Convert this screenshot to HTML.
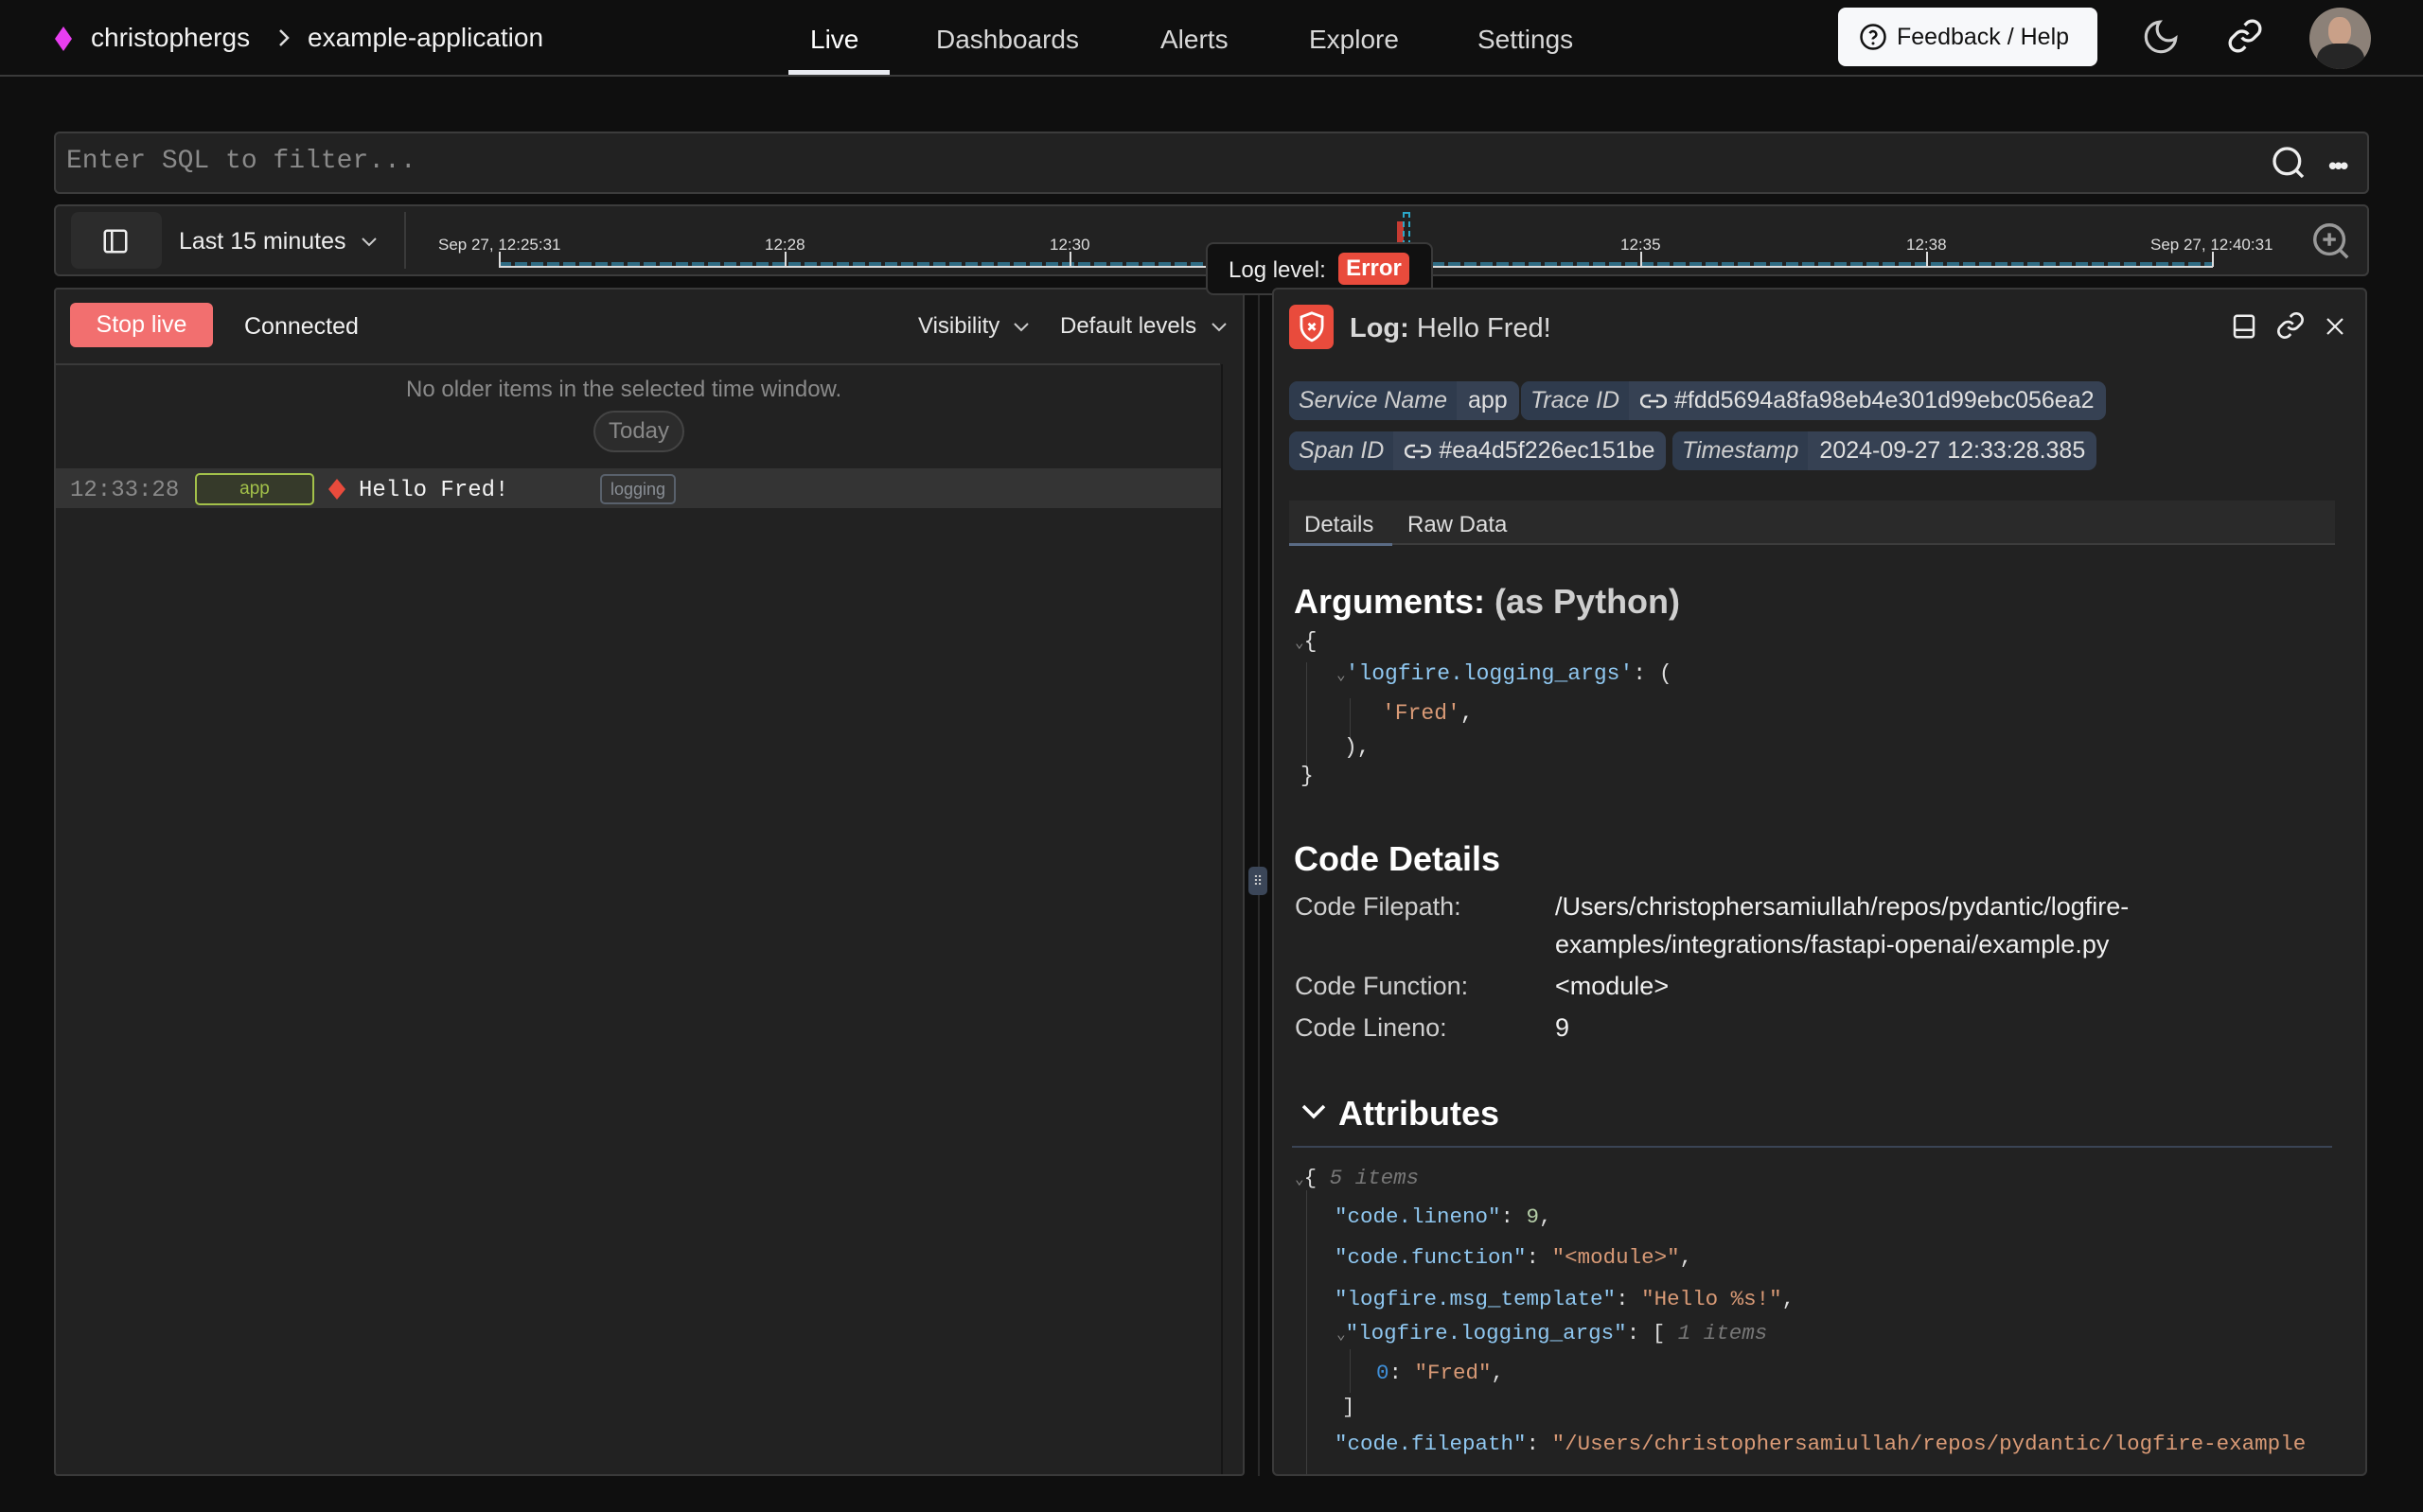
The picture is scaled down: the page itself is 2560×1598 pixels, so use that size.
<!DOCTYPE html>
<html><head><meta charset="utf-8"><style>
*{box-sizing:border-box;margin:0;padding:0}
body{width:2560px;height:1598px;background:#0f0f0f;color:#e8e8e8;font-family:"Liberation Sans",sans-serif;position:relative;overflow:hidden}
.a{position:absolute;white-space:nowrap}
.m{font-family:"Liberation Mono",monospace}
.nav{font-size:28px;color:#d8d8d8;top:26px}
.pill{position:absolute;height:41px;border-radius:9px;background:#364153;display:flex;align-items:center;font-size:25px;color:#e0e0e0;overflow:hidden}
.pill .k{background:#2f3b4d;height:100%;display:flex;align-items:center;padding:0 10px;font-style:italic;color:#cfcfcf}
.pill .v{padding:0 12px;display:flex;align-items:center;gap:8px}
.c{font-size:23px}
.c2{font-size:22.5px}
.key{color:#8fc7f0}.str{color:#d99a76}.num{color:#b5cea8}.gr{color:#777;font-style:italic}
.lbl{font-size:27px;color:#cfcfcf}
.val{font-size:27px;color:#f0f0f0}
</style></head><body>
<div class="a" style="left:0;top:79px;width:2560px;height:2px;background:#3a3a3a"></div>
<div class="a" style="left:58px;top:28px;width:18px;height:26px;background:#e83ef0;clip-path:polygon(50% 0,100% 50%,50% 100%,0 50%)"></div>
<div class="a" style="left:96px;top:24px;font-size:28px;color:#f2f2f2">christophergs</div>
<svg class="a" style="left:292px;top:28px" width="16" height="24" viewBox="0 0 16 24"><path d="M4 4l8 8-8 8" stroke="#ddd" stroke-width="2.5" fill="none"/></svg>
<div class="a" style="left:325px;top:24px;font-size:28px;color:#f2f2f2">example-application</div>
<div class="a nav" style="left:856px;color:#fff">Live</div>
<div class="a" style="left:833px;top:74px;width:107px;height:5px;background:#e8eaf0"></div>
<div class="a nav" style="left:989px">Dashboards</div>
<div class="a nav" style="left:1226px">Alerts</div>
<div class="a nav" style="left:1383px">Explore</div>
<div class="a nav" style="left:1561px">Settings</div>
<div class="a" style="left:1942px;top:8px;width:274px;height:62px;background:#f7f8fa;border-radius:8px;color:#111;font-size:25px;display:flex;align-items:center;padding-left:22px;gap:10px">
<svg width="30" height="30" viewBox="0 0 24 24"><circle cx="12" cy="12" r="10" stroke="#111" stroke-width="2" fill="none"/><path d="M9.3 9a2.8 2.8 0 0 1 5.4 1c0 2-3 2.5-3 4" stroke="#111" stroke-width="2" fill="none"/><circle cx="12" cy="17.5" r="1.2" fill="#111"/></svg>Feedback / Help</div>
<svg class="a" style="left:2262px;top:18px" width="42" height="42" viewBox="0 0 24 24"><path d="M21 12.8A9 9 0 1 1 11.2 3a7 7 0 0 0 9.8 9.8z" stroke="#ccc" stroke-width="1.8" fill="none"/></svg>
<svg class="a" style="left:2352px;top:18px" width="40" height="40" viewBox="0 0 24 24"><path d="M10 13a5 5 0 0 0 7.5.5l3-3a5 5 0 0 0-7-7l-1.7 1.7M14 11a5 5 0 0 0-7.5-.5l-3 3a5 5 0 0 0 7 7l1.7-1.7" stroke="#eee" stroke-width="2" fill="none"/></svg>
<div class="a" style="left:2440px;top:8px;width:65px;height:65px;border-radius:50%;overflow:hidden;background:#8c8178">
<div class="a" style="left:20px;top:10px;width:24px;height:30px;border-radius:45%;background:#c9a088"></div>
<div class="a" style="left:8px;top:38px;width:50px;height:40px;border-radius:40% 40% 0 0;background:#262626"></div></div>
<div class="a" style="left:57px;top:139px;width:2446px;height:66px;background:#222;border:2px solid #3c3c3c;border-radius:6px"></div>
<div class="a m" style="left:70px;top:155px;font-size:28px;color:#8a8a8a">Enter SQL to filter...</div>
<svg class="a" style="left:2398px;top:152px" width="40" height="40" viewBox="0 0 24 24"><circle cx="11" cy="11" r="8" stroke="#eee" stroke-width="2" fill="none"/><path d="M17 17l4 4" stroke="#eee" stroke-width="2"/></svg>
<div class="a" style="left:2460px;top:160px;font-size:26px;color:#eee;letter-spacing:-3px;font-weight:bold">•••</div>
<div class="a" style="left:57px;top:216px;width:2446px;height:76px;background:#222;border:2px solid #3c3c3c;border-radius:6px"></div>
<div class="a" style="left:75px;top:224px;width:96px;height:60px;background:#2c2c2c;border-radius:8px"></div>
<svg class="a" style="left:107px;top:240px" width="30" height="30" viewBox="0 0 24 24"><rect x="3" y="3" width="18" height="18" rx="2" stroke="#eee" stroke-width="2" fill="none"/><path d="M9 3v18" stroke="#eee" stroke-width="2"/></svg>
<div class="a" style="left:189px;top:241px;font-size:25px;color:#eee">Last 15 minutes</div>
<svg class="a" style="left:380px;top:245px" width="20" height="20" viewBox="0 0 20 20"><path d="M3 7l7 7 7-7" stroke="#ccc" stroke-width="2" fill="none"/></svg>
<div class="a" style="left:427px;top:224px;width:2px;height:60px;background:#3a3a3a"></div>
<div class="a" style="left:527px;top:277px;width:1811px;height:4px;background:repeating-linear-gradient(90deg,#2f6c84 0 13px,transparent 13px 17px)"></div>
<div class="a" style="left:527px;top:281px;width:1811px;height:2px;background:#ddd"></div>
<div class="a" style="left:527px;top:266px;width:2px;height:16px;background:#ddd"></div>
<div class="a" style="left:829px;top:266px;width:2px;height:16px;background:#ddd"></div>
<div class="a" style="left:1130px;top:266px;width:2px;height:16px;background:#ddd"></div>
<div class="a" style="left:1733px;top:266px;width:2px;height:16px;background:#ddd"></div>
<div class="a" style="left:2035px;top:266px;width:2px;height:16px;background:#ddd"></div>
<div class="a" style="left:2337px;top:266px;width:2px;height:16px;background:#ddd"></div>
<div class="a" style="left:463px;top:249px;font-size:17px;color:#ddd">Sep 27, 12:25:31</div>
<div class="a" style="left:808px;top:249px;font-size:17px;color:#ddd">12:28</div>
<div class="a" style="left:1109px;top:249px;font-size:17px;color:#ddd">12:30</div>
<div class="a" style="left:1712px;top:249px;font-size:17px;color:#ddd">12:35</div>
<div class="a" style="left:2014px;top:249px;font-size:17px;color:#ddd">12:38</div>
<div class="a" style="left:2272px;top:249px;font-size:17px;color:#ddd">Sep 27, 12:40:31</div>
<div class="a" style="left:1476px;top:234px;width:7px;height:22px;background:#c63b32"></div>
<div class="a" style="left:1482px;top:224px;width:8px;height:36px;border:2px dashed #2ba7c8"></div>
<svg class="a" style="left:2440px;top:232px" width="46" height="46" viewBox="0 0 24 24"><circle cx="11" cy="11" r="8" stroke="#999" stroke-width="1.8" fill="none"/><path d="M17 17l4 4M11 7.5v7M7.5 11h7" stroke="#999" stroke-width="1.8"/></svg>
<div class="a" style="left:57px;top:304px;width:1258px;height:1256px;background:#222;border:2px solid #3a3a3a;border-radius:4px"></div>
<div class="a" style="left:59px;top:384px;width:1230px;height:2px;background:#3a3a3a"></div>
<div class="a" style="left:1290px;top:385px;width:2px;height:1173px;background:#161616"></div>
<div class="a" style="left:74px;top:320px;width:151px;height:47px;background:#f26f6f;border-radius:6px;color:#fff;font-size:25px;display:flex;align-items:center;justify-content:center">Stop live</div>
<div class="a" style="left:258px;top:331px;font-size:25px;color:#f2f2f2">Connected</div>
<div class="a" style="left:970px;top:331px;font-size:24px;color:#e8e8e8">Visibility</div>
<svg class="a" style="left:1069px;top:335px" width="20" height="20" viewBox="0 0 20 20"><path d="M3 7l7 7 7-7" stroke="#ccc" stroke-width="2" fill="none"/></svg>
<div class="a" style="left:1120px;top:331px;font-size:24px;color:#e8e8e8">Default levels</div>
<svg class="a" style="left:1278px;top:335px" width="20" height="20" viewBox="0 0 20 20"><path d="M3 7l7 7 7-7" stroke="#ccc" stroke-width="2" fill="none"/></svg>
<div class="a" style="left:429px;top:398px;font-size:24px;color:#8a8a8a">No older items in the selected time window.</div>
<div class="a" style="left:627px;top:434px;width:96px;height:44px;border:2px solid #444;background:#2c2c2c;border-radius:22px;font-size:24px;color:#888;display:flex;align-items:center;justify-content:center">Today</div>
<div class="a" style="left:59px;top:495px;width:1231px;height:42px;background:#343434"></div>
<div class="a m" style="left:74px;top:505px;font-size:24px;color:#8a8a8a">12:33:28</div>
<div class="a" style="left:206px;top:500px;width:126px;height:34px;border:2px solid #a3c14a;background:#363a2a;border-radius:5px;color:#a3c14a;font-size:19px;display:flex;align-items:center;justify-content:center">app</div>
<div class="a" style="left:347px;top:506px;width:18px;height:22px;background:#e94b3c;clip-path:polygon(50% 0,100% 50%,50% 100%,0 50%)"></div>
<div class="a m" style="left:379px;top:505px;font-size:24px;color:#f2f2f2">Hello Fred!</div>
<div class="a" style="left:634px;top:501px;width:80px;height:32px;border:2px solid #59616c;border-radius:5px;color:#8a8f96;font-size:18px;display:flex;align-items:center;justify-content:center">logging</div>
<div class="a" style="left:1329px;top:304px;width:2px;height:1256px;background:#2a2a2a"></div>
<div class="a" style="left:1319px;top:916px;width:20px;height:30px;background:#3b4658;border-radius:5px;color:#ccc;font-size:14px;text-align:center;line-height:30px">⠿</div>
<div class="a" style="left:1274px;top:256px;width:240px;height:56px;background:#111;border:2px solid #3a3a3a;border-radius:8px"></div>
<div class="a" style="left:1298px;top:272px;font-size:24px;color:#eee">Log level:</div>
<div class="a" style="left:1414px;top:267px;width:75px;height:34px;background:#e94b3c;border-radius:6px;color:#fff;font-size:24px;font-weight:bold;text-align:center;line-height:34px">Error</div>
<div class="a" style="left:1344px;top:304px;width:1157px;height:1256px;background:#222;border:2px solid #3a3a3a;border-radius:6px"></div>
<div class="a" style="left:1362px;top:322px;width:47px;height:47px;background:#e94b3c;border-radius:7px"></div>
<svg class="a" style="left:1369px;top:328px" width="34" height="36" viewBox="0 0 24 26"><path d="M12 2l8 3v7c0 5-3.5 9-8 11-4.5-2-8-6-8-11V5z" stroke="#fff" stroke-width="2" fill="none"/><path d="M9.5 10l5 5M14.5 10l-5 5" stroke="#fff" stroke-width="2"/></svg>
<div class="a" style="left:1426px;top:331px;font-size:29px;color:#d8d8d8"><b>Log:</b> Hello Fred!</div>
<svg class="a" style="left:2356px;top:330px" width="30" height="30" viewBox="0 0 24 24"><rect x="4" y="3" width="16" height="18" rx="2" stroke="#eee" stroke-width="2" fill="none"/><path d="M4 15h16" stroke="#eee" stroke-width="2"/></svg>
<svg class="a" style="left:2404px;top:328px" width="32" height="32" viewBox="0 0 24 24"><path d="M10 13a5 5 0 0 0 7.5.5l3-3a5 5 0 0 0-7-7l-1.7 1.7M14 11a5 5 0 0 0-7.5-.5l-3 3a5 5 0 0 0 7 7l1.7-1.7" stroke="#eee" stroke-width="2" fill="none"/></svg>
<svg class="a" style="left:2455px;top:333px" width="24" height="24" viewBox="0 0 24 24"><path d="M4 4l16 16M20 4L4 20" stroke="#eee" stroke-width="2.2"/></svg>
<div class="pill" style="left:1362px;top:403px"><span class="k">Service Name</span><span class="v">app</span></div>
<div class="pill" style="left:1607px;top:403px"><span class="k">Trace ID</span><span class="v"><svg width="28" height="20" viewBox="0 0 28 20"><path d="M11 4H7a6 6 0 0 0 0 12h4M17 4h4a6 6 0 0 1 0 12h-4M9 10h10" stroke="#ddd" stroke-width="2.5" fill="none"/></svg>#fdd5694a8fa98eb4e301d99ebc056ea2</span></div>
<div class="pill" style="left:1362px;top:456px"><span class="k">Span ID</span><span class="v"><svg width="28" height="20" viewBox="0 0 28 20"><path d="M11 4H7a6 6 0 0 0 0 12h4M17 4h4a6 6 0 0 1 0 12h-4M9 10h10" stroke="#ddd" stroke-width="2.5" fill="none"/></svg>#ea4d5f226ec151be</span></div>
<div class="pill" style="left:1767px;top:456px"><span class="k">Timestamp</span><span class="v">2024-09-27 12:33:28.385</span></div>
<div class="a" style="left:1362px;top:529px;width:1105px;height:47px;background:#2a2a2a;border-bottom:2px solid #3d3d3d"></div>
<div class="a" style="left:1362px;top:574px;width:109px;height:3px;background:#5a6b85"></div>
<div class="a" style="left:1378px;top:541px;font-size:24px;color:#ddd">Details</div>
<div class="a" style="left:1487px;top:541px;font-size:24px;color:#ddd">Raw Data</div>
<div class="a" style="left:1367px;top:615px;font-size:36px;font-weight:bold;color:#fff">Arguments: <span style="color:#cfcfcf">(as Python)</span></div>
<div class="a m c" style="left:1368px;top:665px;color:#ddd"><span style="color:#888;font-size:16px">⌄</span>{</div>
<div class="a" style="left:1380px;top:700px;width:1px;height:120px;background:#3d3d3d"></div>
<div class="a m c" style="left:1412px;top:699px;color:#ddd"><span style="color:#888;font-size:16px">⌄</span><span class="key">'logfire.logging_args'</span>:  (</div>
<div class="a" style="left:1426px;top:738px;width:1px;height:46px;background:#3d3d3d"></div>
<div class="a m c" style="left:1460px;top:741px"><span class="str">'Fred'</span>,</div>
<div class="a m c" style="left:1420px;top:777px;color:#ddd">),</div>
<div class="a m c" style="left:1374px;top:807px;color:#ddd">}</div>
<div class="a" style="left:1367px;top:887px;font-size:36px;font-weight:bold;color:#fff">Code Details</div>
<div class="a lbl" style="left:1368px;top:943px">Code Filepath:</div>
<div class="a val" style="left:1643px;top:943px">/Users/christophersamiullah/repos/pydantic/logfire-</div>
<div class="a val" style="left:1643px;top:983px">examples/integrations/fastapi-openai/example.py</div>
<div class="a lbl" style="left:1368px;top:1027px">Code Function:</div>
<div class="a val" style="left:1643px;top:1027px">&lt;module&gt;</div>
<div class="a lbl" style="left:1368px;top:1071px">Code Lineno:</div>
<div class="a val" style="left:1643px;top:1071px">9</div>
<svg class="a" style="left:1374px;top:1162px" width="28" height="26" viewBox="0 0 28 26"><path d="M3 7l11 11 11-11" stroke="#fff" stroke-width="3.5" fill="none"/></svg>
<div class="a" style="left:1414px;top:1156px;font-size:36px;font-weight:bold;color:#fff">Attributes</div>
<div class="a" style="left:1365px;top:1211px;width:1099px;height:2px;background:#3a4455"></div>
<div class="a m c2" style="left:1368px;top:1232px;color:#ddd"><span style="color:#888;font-size:16px">⌄</span>{ <span class="gr">5 items</span></div>
<div class="a" style="left:1380px;top:1258px;width:1px;height:300px;background:#3d3d3d"></div>
<div class="a m c2" style="left:1410px;top:1273px;color:#ddd"><span class="key">"code.lineno"</span>: <span class="num">9</span>,</div>
<div class="a m c2" style="left:1410px;top:1316px;color:#ddd"><span class="key">"code.function"</span>: <span class="str">"&lt;module&gt;"</span>,</div>
<div class="a m c2" style="left:1410px;top:1360px;color:#ddd"><span class="key">"logfire.msg_template"</span>: <span class="str">"Hello %s!"</span>,</div>
<div class="a m c2" style="left:1412px;top:1396px;color:#ddd"><span style="color:#888;font-size:16px">⌄</span><span class="key">"logfire.logging_args"</span>:  [ <span class="gr">1 items</span></div>
<div class="a" style="left:1426px;top:1426px;width:1px;height:46px;background:#3d3d3d"></div>
<div class="a m c2" style="left:1454px;top:1438px;color:#ddd"><span style="color:#3f8fd8">0</span>: <span class="str">"Fred"</span>,</div>
<div class="a m c2" style="left:1418px;top:1474px;color:#ddd">]</div>
<div class="a m c2" style="left:1410px;top:1513px;color:#ddd"><span class="key">"code.filepath"</span>: <span class="str">"/Users/christophersamiullah/repos/pydantic/logfire-example</span></div>
</body></html>
